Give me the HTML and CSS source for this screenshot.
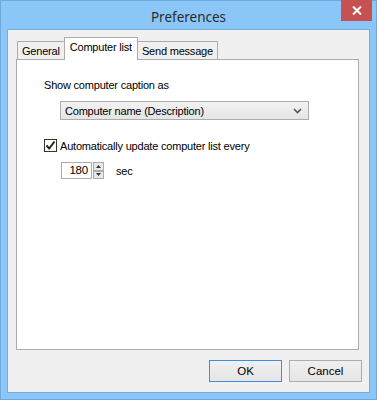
FILE: index.html
```
<!DOCTYPE html>
<html>
<head>
    <title>Preferences</title>
    <link rel="stylesheet" href="styles.css">
</head>
<body>
    <div class="window">
        <!-- 標題列 -->
        <div class="titlebar">
            <span class="title">Preferences</span>
            <div class="close-btn">
                <svg width="10" height="9" viewBox="0 0 10 9">
                    <path d="M1 0.5 L9 8.5 M9 0.5 L1 8.5" stroke="#fff" stroke-width="2"/>
                </svg>
            </div>
        </div>

        <div class="content">
            <!-- 分頁 -->
            <div class="tabs">
                <div class="tab">General</div>
                <div class="tab active">Computer list</div>
                <div class="tab">Send message</div>
            </div>

            <div class="panel">
                <div class="label">Show computer caption as</div>
                <div class="select">
                    <span>Computer name (Description)</span>
                    <svg width="9" height="6" viewBox="0 0 9 6">
                        <path d="M1 1 L4.5 4.5 L8 1" stroke="#555" stroke-width="1.6" fill="none"/>
                    </svg>
                </div>

                <div class="check-row">
                    <div class="checkbox">
                        <svg width="11" height="11" viewBox="0 0 11 11">
                            <path d="M1.5 5.5 L4.2 8.5 L9.5 1.5" stroke="#222" stroke-width="2" fill="none"/>
                        </svg>
                    </div>
                    <span>Automatically update computer list every</span>
                </div>

                <div class="spin-row">
                    <div class="spin-input">180</div>
                    <div class="spin-btns">
                        <div class="spin-btn">
                            <svg width="5" height="3" viewBox="0 0 5 3"><path d="M0 3 L2.5 0 L5 3 Z" fill="#333"/></svg>
                        </div>
                        <div class="spin-btn">
                            <svg width="5" height="3" viewBox="0 0 5 3"><path d="M0 0 L2.5 3 L5 0 Z" fill="#333"/></svg>
                        </div>
                    </div>
                    <span class="unit">sec</span>
                </div>
            </div>

            <!-- 按鈕 -->
            <div class="footer">
                <button class="btn default">OK</button>
                <button class="btn">Cancel</button>
            </div>
        </div>
    </div>
</body>
</html>
```

FILE: styles.css
```
body {
    margin: 0;
    font-family: "Liberation Sans", Arial, sans-serif;
    font-size: 11px;
    letter-spacing: -0.2px;
    color: #000;
}

.window {
    box-sizing: border-box;
    width: 377px;
    height: 400px;
    background-color: #8bc6f8;
    border: 1px solid #6ea9dc;
    padding: 0 6px 6px 6px;
    display: flex;
    flex-direction: column;
}

.titlebar {
    height: 28px;
    position: relative;
    display: flex;
    justify-content: center;
    align-items: center;
}

.title {
    font-family: "Noto Sans", sans-serif;
    font-size: 13.5px;
    letter-spacing: 0;
    color: #2b2b2b;
    margin-top: 3px;
}

.close-btn {
    position: absolute;
    top: -1px;
    right: -2px;
    width: 31px;
    height: 21px;
    background-color: #c75050;
    display: flex;
    justify-content: center;
    align-items: center;
}

.content {
    flex: 1;
    background-color: #f0f0f0;
    border: 1px solid #74acdc;
    padding: 8px 10px 0 8px;
    display: flex;
    flex-direction: column;
}

.tabs {
    display: flex;
    align-items: flex-end;
    height: 21px;
    padding-left: 1px;
    position: relative;
    z-index: 1;
}

.tab {
    box-sizing: border-box;
    height: 18px;
    border: 1px solid #acacac;
    border-bottom: none;
    background-color: #f0f0f0;
    padding: 0 4px;
    display: flex;
    align-items: center;
}

.tab + .tab {
    margin-left: -1px;
}

.tab.active {
    height: 23px;
    margin-bottom: -1px;
    background-color: #fff;
    padding: 0 5px 4px 5px;
}

.panel {
    box-sizing: border-box;
    height: 291px;
    background-color: #fff;
    border: 1px solid #acacac;
    padding: 18px 0 0 27px;
    display: flex;
    flex-direction: column;
    align-items: flex-start;
}

.label {
    line-height: 14px;
}

.select {
    box-sizing: border-box;
    width: 249px;
    height: 19px;
    margin: 9px 0 0 16px;
    border: 1px solid #acacac;
    background: linear-gradient(#f2f2f2, #e5e5e5);
    display: flex;
    justify-content: space-between;
    align-items: center;
    padding: 0 6px 0 4px;
}

.check-row {
    display: flex;
    align-items: center;
    margin-top: 19px;
}

.checkbox {
    box-sizing: border-box;
    width: 13px;
    height: 13px;
    border: 1px solid #333;
    background-color: #fff;
    display: flex;
    justify-content: center;
    align-items: center;
    margin-right: 3px;
}

.spin-row {
    display: flex;
    align-items: center;
    margin: 10px 0 0 17px;
}

.spin-input {
    box-sizing: border-box;
    width: 31px;
    height: 17px;
    border: 1px solid #acacac;
    text-align: right;
    padding-right: 3px;
    line-height: 15px;
    font-size: 11.5px;
}

.spin-btns {
    display: flex;
    flex-direction: column;
    height: 17px;
    margin-left: 1px;
}

.spin-btn {
    box-sizing: border-box;
    width: 11px;
    height: 8.5px;
    border: 1px solid #acacac;
    background-color: #e8e8e8;
    display: flex;
    justify-content: center;
    align-items: center;
}

.unit {
    margin-left: 12px;
}

.footer {
    display: flex;
    justify-content: flex-end;
    gap: 7px;
    margin-top: 10px;
    margin-right: -3px;
}

.btn {
    box-sizing: border-box;
    width: 73px;
    height: 22px;
    border: 1px solid #adadad;
    background: linear-gradient(#f0f0f0, #e5e5e5);
    font-family: "Liberation Sans", Arial, sans-serif;
    font-size: 11.5px;
    color: #000;
    padding: 0;
}

.btn.default {
    border-color: #3c8ee0;
}
```
